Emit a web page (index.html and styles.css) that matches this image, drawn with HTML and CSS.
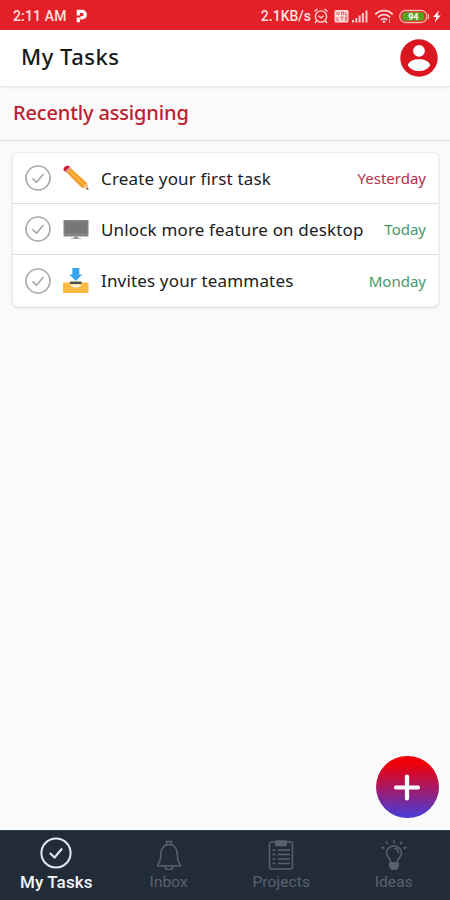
FILE: index.html
```html
<!DOCTYPE html>
<html lang="en">
<head>
<meta charset="utf-8">
<title>My Tasks</title>
<link rel="stylesheet" href="styles.css">
</head>
<body>
<div class="app">
  <div class="status">
    <span class="time">2:11 AM</span>
    <svg class="p-logo" width="12" height="14" viewBox="0 0 12 14"><path d="M2.300 13.300V8.500M2.300 6.500V2.300H6a3.200 3.200 0 0 1 0 6.600H4.300" fill="none" stroke="#fff" stroke-width="3.200"/></svg>
    <span class="speed">2.1KB/s</span>
    <svg class="status-icons" width="130" height="20" viewBox="0 0 130 20">
      <g fill="none" stroke="#ffd5d5" stroke-width="1.400">
        <circle cx="10" cy="10.500" r="5.600"/>
        <path d="M3.500 5.500l3-2.500M16.500 5.500l-3-2.500M5.500 15L4 17M14.500 15l1.500 2M7.300 9.800l2.700 2 2.700-2"/>
      </g>
      <rect x="23.500" y="4" width="14" height="12.500" rx="1.500" fill="#ffdada"/>
      <path d="M25.500 6L27 9l1.500-3M30.500 9V6h2v3M34.500 6v3h2M26 11v3.500h2M29.500 11h3M31 11v3.500M36.500 11h-2v3.500h2M34.500 12.800h2" fill="none" stroke="#e34a50" stroke-width=".800"/>
      <path d="M41 14h2v2.500h-2zM44.300 12h2v4.500h-2zM47.600 9.500h2v7h-2zM50.900 7h2v9.500h-2zM54.500 4.500h2v12h-2z" fill="#ffcaca"/>
      <g fill="none" stroke="#ffd5d5" stroke-width="1.800"><path d="M64.300 8.300a12 12 0 0 1 17.400 0M67 11.400a8 8 0 0 1 12 0M69.900 14a4 4 0 0 1 6.200 0"/></g>
      <circle cx="73" cy="15.700" r="1.300" fill="#ffd5d5"/><path d="M78.500 13v4" stroke="#ffb0b0"/>
      <rect x="88.800" y="4.500" width="27" height="12" rx="5.500" fill="#e32028" stroke="#f5bba8" stroke-width="1.300"/>
      <rect x="91" y="6.300" width="22.500" height="8.400" rx="3.500" fill="#58a51d"/>
      <path d="M117.500 8v5" stroke="#f5bba8" stroke-width="1.300"/>
      <text x="102.300" y="14" text-anchor="middle" class="battery">94</text>
      <path d="M128 4.500l-6 6.500h3.300l-1.600 5.500 6-7h-3.200z" fill="#fff"/>
    </svg>
  </div>
  <header class="header">
    <h1>My Tasks</h1>
    <svg width="38" height="38" viewBox="0 0 38 38"><circle cx="19" cy="19" r="18.700" fill="#db1620"/><circle cx="19" cy="11.800" r="5.900" fill="#fff"/><path d="M7.800 26C9 22.300 13.500 20.300 19 20.300S29 22.300 30.200 26C28 30 24 32 19 32S10 30 7.800 26z" fill="#fff"/></svg>
  </header>
  <h2 class="section"><span>Recently assigning</span></h2>
  <main class="main">
    <div class="card">
      <div class="row">
        <svg class="check" width="26" height="26" viewBox="0 0 26 26"><circle cx="13" cy="13" r="12"/><path d="M7.500 13.300l4 4 7-8.300"/></svg>
        <svg class="icon" width="28" height="28" viewBox="0 0 28 28"><path d="M7 2.500L25 19l1.500 6.500-7-2L2.500 6.500z" fill="#f4a02c"/><path d="M6 5.500l17 16" stroke="#ffb84c" stroke-width="1.300"/><path d="M1.500 6.500C1 3.500 4 1 7 2L8.200 3.500 3.800 7.800z" fill="#c91f35"/><path d="M7.400 3L3.200 7.200l1.300 1.500 4.300-4.200z" fill="#d5a09a"/><path d="M24.200 20l2.300 5.500-6-1.500z" fill="#f4d1a5"/><path d="M25.800 23.500l.700 2.300-2.500-.600z" fill="#744747"/></svg>
        <span class="name">Create your first task</span><span class="due late">Yesterday</span>
      </div>
      <div class="row">
        <svg class="check" width="26" height="26" viewBox="0 0 26 26"><circle cx="13" cy="13" r="12"/><path d="M7.500 13.300l4 4 7-8.300"/></svg>
        <svg class="icon" width="28" height="28" viewBox="0 0 28 28"><rect x="1.500" y="5" width="25" height="16.500" fill="#858585"/><path d="M3 6.500h22v12H3z" fill="#777"/><path d="M12 21.500h4v1.700h3V24H9v-.800h3z" fill="#999"/></svg>
        <span class="name">Unlock more feature on desktop</span><span class="due">Today</span>
      </div>
      <div class="row">
        <svg class="check" width="26" height="26" viewBox="0 0 26 26"><circle cx="13" cy="13" r="12"/><path d="M7.500 13.300l4 4 7-8.300"/></svg>
        <svg class="icon" width="28" height="28" viewBox="0 0 28 28"><path d="M1 15.500h25.500V26H1z" fill="#fbb944"/><path d="M8 14.500h11.500V17H8z" fill="#50504b"/><path d="M8 17.500h11.500c-.500 4-11 4-11.500 0z" fill="#fff5df"/><path d="M10.300 1h7v6.500h2.900l-6.400 6.500-6.400-6.500h2.900z" fill="#35a5ef"/></svg>
        <span class="name">Invites your teammates</span><span class="due">Monday</span>
      </div>
    </div>
    <button class="fab" aria-label="Add task"><svg width="62" height="62" viewBox="0 0 62 62"><path d="M31 20.500v22M20 31.500h22" stroke="#fff" stroke-width="4.200" stroke-linecap="round"/></svg></button>
  </main>
  <nav class="nav">
    <div class="tab active"><svg width="34" height="34" viewBox="0 0 34 34"><circle cx="17" cy="17" r="14.600"/><path d="M10.800 17l4.800 4.500 7.500-9"/></svg><span>My Tasks</span></div>
    <div class="tab"><svg width="34" height="34" viewBox="0 0 34 34"><path d="M14.500 8.500V5.500h5v3M5.500 30h23M5.500 30c0-2.500 3-3 3-8.500 0-8.500 2.500-13 8.500-13s8.500 4.500 8.500 13c0 5.500 3 6 3 8.500M13 30c0 5 8 5 8 0"/></svg><span>Inbox</span></div>
    <div class="tab"><svg width="34" height="34" viewBox="0 0 34 34"><rect x="5.500" y="6" width="23" height="27" rx="2"/><path d="M12 5h10v4.500H12z" fill="#596271"/><path d="M8.500 14h3M14 14h12M8.500 18.500h3M14 18.500h12M8.500 23h3M14 23h12M8.500 27.500h3M14 27.500h12" stroke-width="1.500"/></svg><span>Projects</span></div>
    <div class="tab"><svg width="34" height="34" viewBox="0 0 34 34"><path d="M14 27c0-4-4.500-6-4.500-10a7.500 7 0 0 1 15 0c0 4-4.500 6-4.500 10zM17 12.500c3 0 4.500 2 4.500 5M17 4v3.500M9 5.500l1.800 2.800M25 5.500l-1.800 2.800M4.500 11l3 1.500M29.500 11l-3 1.500"/><path d="M12.800 27.500h8.400v3L19 33.500h-4l-2.200-3z" fill="#596271"/></svg><span>Ideas</span></div>
  </nav>
</div>
</body>
</html>
```

FILE: styles.css
```css
* { box-sizing: border-box; }
body { margin: 0; font-family: "Noto Sans", "Open Sans", sans-serif; }
svg { display: block; flex: none; }
.app { width: 450px; height: 900px; display: flex; flex-direction: column; background: #fafafa; overflow: hidden; }
.status { height: 30px; flex: none; background: #e32028; display: flex; align-items: center; padding: 2px 9px 0 13px; color: #ffe2e2; font: 500 14px Roboto, sans-serif; }
.time { letter-spacing: .15px; }
.p-logo { margin-left: 9px; }
.speed { margin-left: auto; }
.status-icons { overflow: visible; }
.battery { font: 700 9px Roboto, sans-serif; fill: #fff; }
.header { height: 57px; flex: none; background: #fff; display: flex; align-items: center; justify-content: space-between; padding: 0 12px 0 21px; border-bottom: 1px solid #e9e9e9; box-shadow: 0 1px 3px #0000000d; }
h1 { margin: 0 0 5px; font-size: 22px; font-weight: 500; line-height: 30px; letter-spacing: .5px; color: #181818; }
.section { margin: 0; height: 54px; flex: none; padding: 11px 13px; border-bottom: 1px solid #dedede; font-size: 20px; line-height: 30px; font-weight: 550; letter-spacing: -.15px; color: #bd202e; }
.main { flex: 1; display: flex; flex-direction: column; align-items: flex-end; padding: 11px 11px 12px 12px; }
.card { width: 100%; background: #fff; border: 1px solid #eee; border-radius: 6px; box-shadow: 0 1px 3px #0002; }
.row { height: 51px; display: flex; align-items: center; padding: 0 12px; border-bottom: 1px solid #ddd; }
.row:last-child { border: 0; }
.check { fill: none; stroke: #aaa; stroke-width: 1.700; }
.icon { margin: 0 11px; }
.name { font-size: 17px; letter-spacing: .16px; color: #202020; white-space: nowrap; }
.due { margin-left: auto; font-size: 15px; color: #459a66; white-space: nowrap; }
.late { color: #b72f46; }
.fab { width: 63px; height: 62px; margin-top: auto; padding: 0; border: 0; border-radius: 50%; background: linear-gradient(#f00008 12%, #b11558 46%, #4d3ad1 95%); }
.nav { height: 70px; flex: none; display: flex; background: #222c39; border-top: 1px solid #3c444e; }
.tab { flex: 1; padding-top: 5px; display: flex; flex-direction: column; align-items: center; color: #596271; font: 400 15.500px/24px Roboto, sans-serif; }
.tab span { letter-spacing: .1px; }
.tab svg { fill: none; stroke: #596271; stroke-width: 1.500; }
.active { color: #f3f6fa; font-size: 17px; font-weight: 500; }
.active svg { stroke: #e5ebf2; stroke-width: 2; }
```
